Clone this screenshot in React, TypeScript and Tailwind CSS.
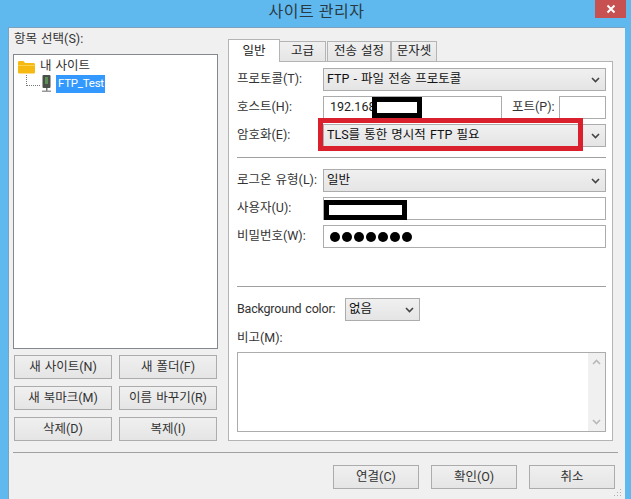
import type { ReactNode } from "react";

const Chevron = () => (
  <svg width="9" height="6" viewBox="0 0 9 6" className="shrink-0">
    <path d="M1 1l3.5 3.5L8 1" fill="none" stroke="#444" strokeWidth="1.6" />
  </svg>
);

function Select({ value, className = "" }: { value: string; className?: string }) {
  return (
    <div className={`h-[23px] flex items-center justify-between pl-[3px] pr-[5px] border border-[#acacac] bg-gradient-to-b from-[#f0f0f0] to-[#e5e5e5] ${className}`}>
      <span className="text-[#111]">{value}</span>
      <Chevron />
    </div>
  );
}

function Input({ children, className = "" }: { children?: ReactNode; className?: string }) {
  return (
    <div className={`relative h-[23px] flex items-center pl-[6px] border border-[#acacac] bg-white ${className}`}>
      {children}
    </div>
  );
}

function Row({ label, children }: { label: string; children: ReactNode }) {
  return (
    <div className="flex items-center h-[23px]">
      <span className="w-[86px] shrink-0 text-[#333] whitespace-nowrap">{label}</span>
      {children}
    </div>
  );
}

function Btn({ label, className = "" }: { label: string; className?: string }) {
  return (
    <div className={`h-[24px] flex items-center justify-center border border-[#acacac] bg-gradient-to-b from-[#f0f0f0] to-[#e5e5e5] text-[#333] ${className}`}>
      {label}
    </div>
  );
}

function Tab({ label, className = "" }: { label: string; className?: string }) {
  return (
    <div className={`h-[20px] mt-[2px] flex items-center justify-center border border-b-0 border-[#b4b4b4] bg-gradient-to-b from-[#f0f0f0] to-[#e5e5e5] text-[#222] ${className}`}>
      {label}
    </div>
  );
}

const Redacted = ({ className }: { className: string }) => (
  <div className={`absolute bg-white border-black ${className}`} />
);

export default function App() {
  return (
    <div className="w-[631px] h-[499px] overflow-hidden flex flex-col bg-[#5fb9ee] text-[12.5px] [word-spacing:1px] leading-none font-['Roboto','Noto_Sans_CJK_KR',sans-serif]">
      {/* title bar */}
      <div className="relative h-[27px] shrink-0 flex items-center justify-center">
        <span className="text-[16px] tracking-[0.5px] [word-spacing:0px] text-[#2a3a44] -mt-[4px] ml-[2px]">사이트 관리자</span>
        <div className="absolute top-0 right-[5px] w-[31px] h-[18px] bg-[#c75050] flex items-center justify-center">
          <svg width="10" height="10" viewBox="0 0 10 10">
            <path d="M1.5 1.5l7 7M8.5 1.5l-7 7" stroke="#fff" strokeWidth="2" />
          </svg>
        </div>
      </div>

      {/* client area */}
      <div className="relative flex-1 ml-[8px] mr-[6px] bg-[#f0f0f0] border-t border-l border-[#7ba3bd] flex flex-col pl-[4px] pr-[7px]">
        <div className="flex gap-[10px] h-[413px] shrink-0">
          {/* left column */}
          <div className="w-[205px] shrink-0 flex flex-col pt-[5px]">
            <div className="h-[21px] pl-[1px] text-[#333]">항목 선택(S):</div>
            <div className="h-[295px] border border-[#828790] bg-white pl-[4px] pt-[4px]">
              <div className="flex items-center h-[15px] gap-[5px]">
                <svg width="17" height="14" viewBox="0 0 17 14" className="shrink-0">
                  <path d="M0 2.5C0 1.5.6 1 1.5 1h4L7 3h8.5c.9 0 1.5.6 1.5 1.5V12c0 1-.6 1.5-1.5 1.5h-14C.6 13.5 0 13 0 12z" fill="#f5b912" />
                  <path d="M0 5h17v1H0z" fill="#fbd24e" />
                </svg>
                <span className="text-[#333]">내 사이트</span>
              </div>
              <div className="flex items-start h-[19px] mt-[1px]">
                <div className="w-[14px] h-[11px] ml-[8px] shrink-0 border-l border-b border-dotted border-[#777]" />
                <svg width="11" height="18" viewBox="0 0 11 18" className="shrink-0 ml-[1px]">
                  <rect x="1.5" y="0" width="8" height="13" rx="1" fill="#4a4f4a" />
                  <rect x="4" y="2" width="3" height="7" fill="#5b8f55" />
                  <rect x="5" y="13" width="1.5" height="3" fill="#777" />
                  <rect x="1" y="15.5" width="9" height="1.5" fill="#999" />
                </svg>
                <span className="ml-[4px] h-[18px] w-[49px] px-[2px] flex items-center bg-[#3399ff] text-white text-[11.5px] tracking-[-0.25px] whitespace-nowrap">FTP_Test</span>
              </div>
            </div>
            <div className="mt-[6px] px-[1px] grid grid-cols-[98px_98px] gap-[7px]">
              <Btn label="새 사이트(N)" />
              <Btn label="새 폴더(F)" />
              <Btn label="새 북마크(M)" />
              <Btn label="이름 바꾸기(R)" />
              <Btn label="삭제(D)" />
              <Btn label="복제(I)" />
            </div>
          </div>

          {/* tabbed panel */}
          <div className="w-[385px] shrink-0 flex flex-col pt-[11px]">
            <div className="relative z-10 flex h-[23px] -mb-px">
              <div className="w-[52px] h-[23px] flex items-center justify-center border border-b-0 border-[#b4b4b4] bg-white text-[#222]">일반</div>
              <Tab label="고급" className="w-[46px] border-l-0" />
              <Tab label="전송 설정" className="w-[64px] ml-[1px]" />
              <Tab label="문자셋" className="w-[46px]" />
            </div>
            <div className="h-[380px] border border-[#b4b4b4] bg-white pl-[8px] pr-[6px] pt-[6px] flex flex-col">
              <div className="flex flex-col gap-[5px]">
                <Row label="프로토콜(T):">
                  <Select value="FTP - 파일 전송 프로토콜" className="flex-1" />
                </Row>
                <Row label="호스트(H):">
                  <Input className="w-[179px] shrink-0">
                    <span className="text-[#222]">192.168</span>
                    <Redacted className="left-[48px] top-0 w-[50px] h-[21px] border-y-[5px] border-x-[5px]" />
                  </Input>
                  <span className="ml-[10px] w-[47px] shrink-0 text-[#333]">포트(P):</span>
                  <Input className="flex-1" />
                </Row>
                <Row label="암호화(E):">
                  <div className="relative flex-1">
                    <Select value="TLS를 통한 명시적 FTP 필요" />
                    {/* red annotation drawn over the screenshot */}
                    <div className="absolute -left-[5px] -top-[6px] w-[265px] h-[33px] border-[5px] border-[#d9202c]" />
                  </div>
                </Row>
              </div>
              <div className="mt-[10px] h-px bg-[#a0a0a0]" />
              <div className="mt-[11px] flex flex-col gap-[5px]">
                <Row label="로그온 유형(L):">
                  <Select value="일반" className="flex-1" />
                </Row>
                <Row label="사용자(U):">
                  <Input className="flex-1">
                    <Redacted className="left-0 top-[2px] w-[83px] h-[20px] border-y-[5px] border-x-[5px]" />
                  </Input>
                </Row>
                <Row label="비밀번호(W):">
                  <Input className="flex-1">
                    <div className="flex gap-[2px]">
                      {[0, 1, 2, 3, 4, 5, 6].map((i) => (
                        <span key={i} className="w-[10px] h-[10px] rounded-full bg-black" />
                      ))}
                    </div>
                  </Input>
                </Row>
              </div>
              <div className="mt-[38px] h-px bg-[#a0a0a0]" />
              <div className="mt-[11px] flex items-center h-[23px]">
                <span className="w-[108px] shrink-0 text-[#333] tracking-[-0.2px]">Background color:</span>
                <Select value="없음" className="w-[75px] shrink-0" />
              </div>
              <div className="h-[31px] flex items-center pt-[4px] text-[#333]">비고(M):</div>
              <div className="h-[80px] border border-[#acacac] bg-white flex justify-end">
                <div className="w-[17px] bg-[#f0f0f0] flex flex-col items-center justify-between py-[6px]">
                  <svg width="9" height="6" viewBox="0 0 9 6">
                    <path d="M1 5l3.5-3.5L8 5" fill="none" stroke="#b8b8b8" strokeWidth="1.6" />
                  </svg>
                  <svg width="9" height="6" viewBox="0 0 9 6">
                    <path d="M1 1l3.5 3.5L8 1" fill="none" stroke="#b8b8b8" strokeWidth="1.6" />
                  </svg>
                </div>
              </div>
            </div>
          </div>
        </div>

        {/* bottom buttons */}
        <div className="mt-[11px] h-px bg-[#a0a0a0] shrink-0" />
        <div className="mt-[12px] flex justify-end gap-[12px] pr-[3px]">
          <Btn label="연결(C)" className="w-[86px] border-[#3c7fb1]" />
          <Btn label="확인(O)" className="w-[86px]" />
          <Btn label="취소" className="w-[86px]" />
        </div>

        {/* size grip */}
        <svg width="8" height="8" viewBox="0 0 8 8" className="absolute right-[3px] bottom-[2px]">
          <path d="M6 0h1v1H6zM6 3h1v1H6zM3 3h1v1H3zM6 6h1v1H6zM3 6h1v1H3zM0 6h1v1H0z" fill="#b0b0b0" />
        </svg>
      </div>
    </div>
  );
}
